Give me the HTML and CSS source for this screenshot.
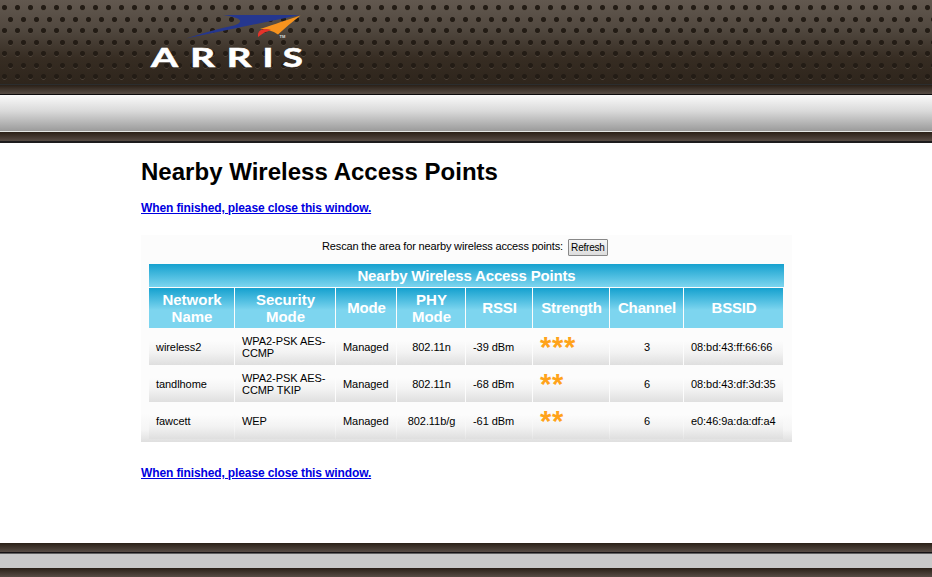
FILE: index.html
```html
<!DOCTYPE html>
<html lang="en">
<head>
<meta charset="utf-8">
<title>Nearby Wireless Access Points</title>
<link rel="stylesheet" href="styles.css">
</head>
<body>
<header class="banner">
  <svg class="logo" width="180" height="80" viewBox="0 0 180 80" role="img" aria-label="ARRIS">
    <path fill="#25378f" d="M83 15H160L46 38.500Q76 29 94 25.500Q101 23 100 20.500Q98 17 83 15Z"/>
    <path fill="#f7931e" d="M160.500 15.500Q148 25 138 34.500Q130 29 120 29Q132 25 160.500 15.500Z"/>
    <path fill="#e5332a" d="M118 37Q117 30 124 29Q128 28.500 131 30Q124 32 118 37Z"/>
    <text class="tm" x="139.500" y="38">TM</text>
    <g class="wordmark">
      <text transform="translate(11 67.300) scale(1.47 1)">A</text>
      <text transform="translate(50.300 67.300) scale(1.45 1)">R</text>
      <text transform="translate(86.800 67.300) scale(1.45 1)">R</text>
      <text transform="translate(122.500 67.300) scale(1.4 1)">I</text>
      <text transform="translate(142.800 67.300) scale(1.38 1)">S</text>
    </g>
  </svg>
</header>
<div class="rail"></div>
<div class="silver"></div>
<div class="rail rail-low"></div>
<main class="content">
  <h1>Nearby Wireless Access Points</h1>
  <a class="close" href="#">When finished, please close this window.</a>
  <section class="panel">
    <div class="rescan"><span>Rescan the area for nearby wireless access points:</span><button type="button">Refresh</button></div>
    <h2>Nearby Wireless Access Points</h2>
    <table>
      <colgroup><col class="c1"><col class="c2"><col class="c3"><col class="c4"><col class="c5"><col class="c6"><col class="c7"><col class="c8"></colgroup>
      <thead>
        <tr><th>Network<br>Name</th><th>Security<br>Mode</th><th class="single">Mode</th><th>PHY<br>Mode</th><th class="single">RSSI</th><th class="single">Strength</th><th class="single">Channel</th><th class="single">BSSID</th></tr>
      </thead>
      <tbody>
        <tr><td>wireless2</td><td>WPA2-PSK AES-<br>CCMP</td><td>Managed</td><td class="mid">802.11n</td><td>-39 dBm</td><td class="stars"><span>***</span></td><td class="mid">3</td><td>08:bd:43:ff:66:66</td></tr>
        <tr><td>tandlhome</td><td>WPA2-PSK AES-<br>CCMP TKIP</td><td>Managed</td><td class="mid">802.11n</td><td>-68 dBm</td><td class="stars"><span>**</span></td><td class="mid">6</td><td>08:bd:43:df:3d:35</td></tr>
        <tr><td>fawcett</td><td>WEP</td><td>Managed</td><td class="mid">802.11b/g</td><td>-61 dBm</td><td class="stars"><span>**</span></td><td class="mid">6</td><td>e0:46:9a:da:df:a4</td></tr>
      </tbody>
    </table>
  </section>
  <a class="close" href="#">When finished, please close this window.</a>
</main>
<footer>
  <div class="rail"></div>
  <div class="footer-bar"></div>
  <div class="rail"></div>
</footer>
</body>
</html>
```
FILE: styles.css
```css
* { box-sizing: border-box; }
body {
  margin: 0;
  height: 577px;
  overflow: hidden;
  display: flex;
  flex-direction: column;
  background: #fff;
  color: #000;
  font: 11px/12px "Liberation Sans", Arial, sans-serif;
}
.banner {
  height: 85px;
  flex: none;
  padding-left: 140px;
  border-bottom: 1px solid #2b2d2e;
  background:
    radial-gradient(circle, #231c15 2.100px, transparent 3px) -2px -4px / 13px 23px,
    radial-gradient(circle, #231c15 2.100px, transparent 3px) 4px 8px / 13px 23px,
    radial-gradient(circle, #554b40 1.700px, transparent 2.800px) -2px -3px / 13px 23px,
    radial-gradient(circle, #554b40 1.700px, transparent 2.800px) 4px 9px / 13px 23px,
    linear-gradient(#62584f, #51483f 35%, #362c22 70%, #2e251c);
}
.logo { display: block; }
.wordmark {
  font: bold 26.500px Lato, "Open Sans", sans-serif;
  fill: #fff;
  stroke: #fff;
  stroke-width: .6px;
}
.tm { font: bold 4px "Liberation Sans", sans-serif; fill: #ddd; }
.rail {
  height: 10px;
  flex: none;
  border-bottom: 1px solid #0c0a0b;
  background: linear-gradient(#2a2017, #574c45);
}
.rail-low { height: 11px; border-bottom: 2px solid #1d1b1d; }
.silver {
  height: 37px;
  flex: none;
  border-bottom: 1px solid #e4e8e6;
  background: linear-gradient(#fafafa, #d9d9d9 45%, #9b9b9b);
}
.content { width: 651px; margin-left: 141px; flex: 1; min-height: 0; }
h1 { margin: 15px 0 0; font-size: 24px; line-height: 28px; letter-spacing: .02px; white-space: nowrap; }
.close {
  display: block;
  width: max-content;
  margin-top: 15px;
  font-size: 12px;
  font-weight: bold;
  line-height: 14px;
  letter-spacing: -.12px;
  color: #0000e0;
}
.panel {
  height: 207px;
  margin: 20px 0 24px;
  padding: 0 8px;
  background: linear-gradient(#fcfcfc 86%, #f5f5f5 94%, #dfdfdf);
}
.rescan { height: 29px; display: flex; justify-content: center; padding: 4px 3px 0 0; gap: 5px; line-height: 15px; }
.rescan span { white-space: nowrap; letter-spacing: -.16px; }
button {
  width: 40px;
  height: 17px;
  padding: 1px 0 0;
  border: 1px solid #888;
  border-radius: 1px;
  background: linear-gradient(#f6f6f6, #ddd);
  color: #000;
  font: 10px/12px "Liberation Sans", Arial, sans-serif;
  letter-spacing: -.2px;
}
h2 {
  height: 23px;
  margin: 0;
  background: linear-gradient(#15a1cf, #7dd5ef);
  color: #fff;
  font-size: 15px;
  line-height: 24px;
  letter-spacing: -.16px;
  text-align: center;
}
table { width: 635px; margin-top: 1px; table-layout: fixed; border-collapse: collapse; }
.c1 { width: 86px; }
.c2 { width: 101px; }
.c3 { width: 61px; }
.c4 { width: 69px; }
.c5 { width: 67px; }
.c6 { width: 77px; }
.c7 { width: 74px; }
.c8 { width: 100px; }
th, td { padding: 0; }
th {
  height: 40px;
  background: linear-gradient(#15a1cf, #7dd5ef 55%) left / calc(100% - 1px) 100% no-repeat;
  color: #fff;
  font-size: 15px;
  line-height: 17px;
}
.single { padding-bottom: 2px; letter-spacing: -.15px; }
td {
  height: 37px;
  padding-left: 7px;
  background: linear-gradient(#fcfcfc 35%, #f3f3f3 65%, #dfdfdf) left / calc(100% - 1px) 100% no-repeat;
  letter-spacing: -.06px;
  white-space: nowrap;
}
.mid { padding: 0; text-align: center; }
.stars span {
  display: block;
  height: 25px;
  color: #ffa31a;
  font-size: 29px;
  font-weight: bold;
  line-height: 26px;
  letter-spacing: .72px;
}
footer { height: 34px; flex: none; }
footer .rail { height: 10px; border-bottom: 1px solid #151214; }
.footer-bar { height: 15px; border-top: 1px solid #606060; background: #c9c9c9; }
```
